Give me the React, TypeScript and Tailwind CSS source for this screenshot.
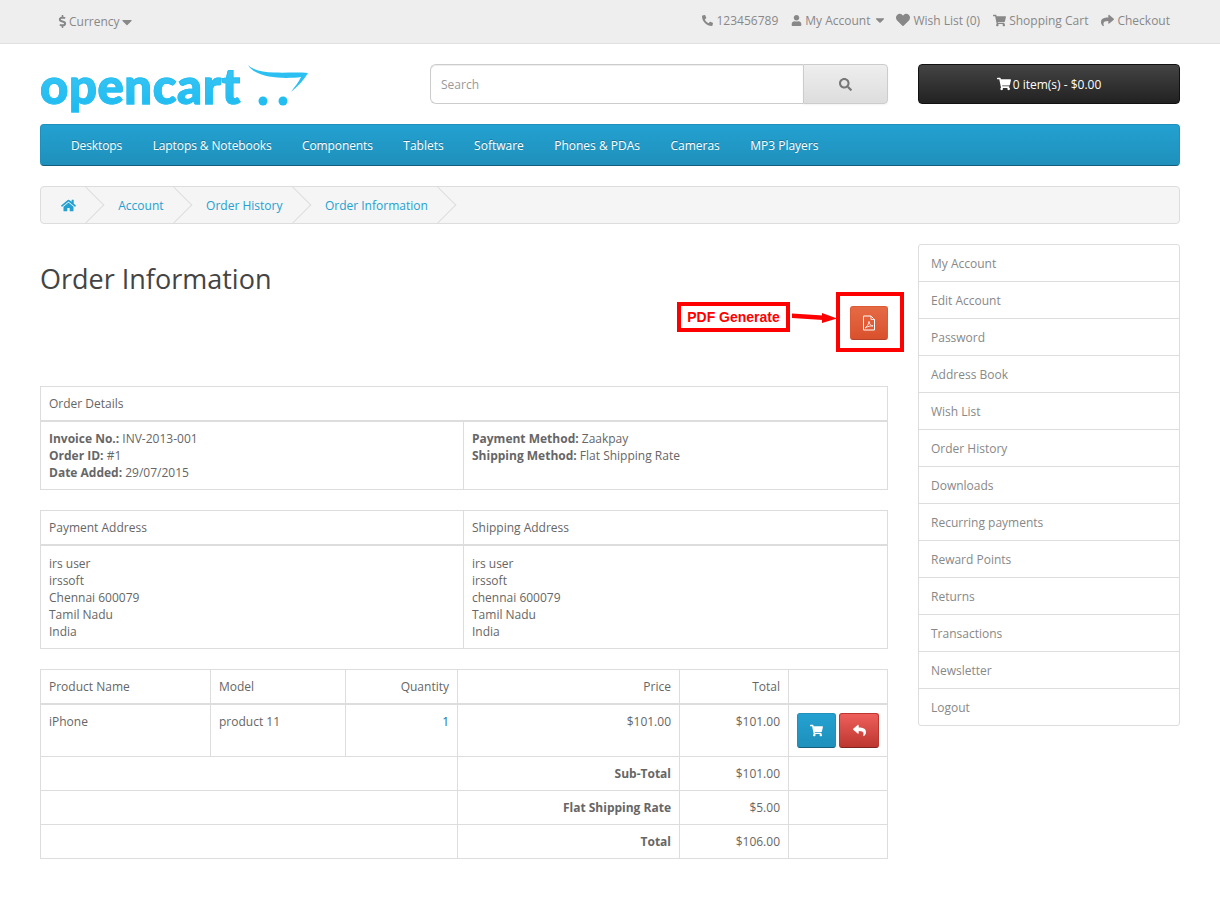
import React from 'react';
import { FaPhone, FaUser, FaHeart, FaShoppingCart, FaShare, FaHome, FaSearch, FaDollarSign, FaCaretDown, FaReply } from 'react-icons/fa';

const navItems = ['Desktops', 'Laptops & Notebooks', 'Components', 'Tablets', 'Software', 'Phones & PDAs', 'Cameras', 'MP3 Players'];
const sideItems = ['My Account', 'Edit Account', 'Password', 'Address Book', 'Wish List', 'Order History', 'Downloads', 'Recurring payments', 'Reward Points', 'Returns', 'Transactions', 'Newsletter', 'Logout'];
const crumbs = ['Account', 'Order History', 'Order Information'];

const Logo = () => (
  <div className="flex items-start w-[270px] h-[40px]">
    <span className="w-[201px] shrink-0 -mt-[3px] pb-[10px] text-[49px] leading-[48px] font-black tracking-[0.6px] bg-gradient-to-b from-[#3cc8f4] to-[#12b8f0] bg-clip-text text-transparent [-webkit-text-stroke:1px_#28bff2] font-['Lato',sans-serif]">opencart</span>
    {/* cart swoosh */}
    <svg width="62" height="44" viewBox="0 0 62 44" className="ml-[7px] shrink-0">
      <path d="M0 1 C5 6 14 8 26 8.5 C38 9 50 8 60 9 C56 16 50 22 43 28 C47 22 51 18 53 13 C38 15 8 15 0 1 Z" fill="#2cc0f2" />
      <circle cx="15" cy="37" r="4.5" fill="#22bdf1" />
      <circle cx="35" cy="37" r="4.5" fill="#22bdf1" />
    </svg>
  </div>
);

// page outline with the acrobat squiggle, thinner than the package's pdf icon
const PdfIcon = () => (
  <svg width="14" height="16" viewBox="0 0 14 16" fill="none" stroke="white">
    <path d="M1.5 1 H9 L12.5 4.5 V15 H1.5 Z" strokeWidth="1" />
    <path d="M9 1 V4.5 H12.5" strokeWidth="0.8" />
    <path d="M3 13 C5 12 6.5 9.5 7 6.5 C7.3 9 8.5 10.5 11 11 C8.5 10.8 6 11.3 3 13 Z" strokeWidth="0.8" />
  </svg>
);

const TopLink = ({ icon, children, className = '' }: { icon: React.ReactNode; children: React.ReactNode; className?: string }) => (
  <span className={`flex items-center gap-[3px] ${className}`}>
    {icon}
    {children}
  </span>
);

const th = 'border border-[#ddd] border-b-2 px-2 font-normal text-left';
const td = 'border border-[#ddd] p-2 align-top';

export default function App() {
  return (
    <div className="bg-white min-h-[897px] text-[12px] leading-[17px] text-[#666] font-['Open_Sans',sans-serif]">
      {/* top bar */}
      <div className="h-[44px] bg-[#eee] border-b border-[#e2e2e2] text-[#888]">
        <div className="w-[1140px] mx-auto h-full flex items-center justify-between pl-[17px] pr-[10px]">
          <span className="flex items-center">
            <FaDollarSign size={13} className="-ml-[1px]" />
            Currency
            <FaCaretDown size={16} className="-ml-[1px]" />
          </span>
          <div className="flex items-center gap-[13px] -mt-[3px]">
            <TopLink icon={<FaPhone size={11} className="-scale-x-100" />}>123456789</TopLink>
            <TopLink icon={<FaUser size={11} />} className="-mr-[4px]">
              My Account <FaCaretDown size={14} />
            </TopLink>
            <TopLink icon={<FaHeart size={14} />}>Wish List (0)</TopLink>
            <TopLink icon={<FaShoppingCart size={13} />}>Shopping Cart</TopLink>
            <TopLink icon={<FaShare size={13} />}>Checkout</TopLink>
          </div>
        </div>
      </div>

      <div className="w-[1140px] mx-auto">
        {/* header */}
        <div className="flex items-start pt-[20px]">
          <Logo />
          <div className="ml-[120px] w-[458px] h-[40px] flex">
            <div className="w-[373px] border border-[#ccc] border-r-0 rounded-l-[6px] px-[10px] flex items-center text-[#999] shadow-[inset_0_1px_1px_rgba(0,0,0,0.075)]">Search</div>
            <div className="flex-1 flex items-center justify-center border border-[#ccc] rounded-r-[4px] bg-gradient-to-b from-[#eeeeee] to-[#dddddd] text-[#777] shadow-[0_1px_2px_rgba(0,0,0,0.05)]">
              <FaSearch size={13} />
            </div>
          </div>
          <div className="ml-[30px] w-[262px] h-[40px] rounded-[4px] border border-[#111] bg-gradient-to-b from-[#444444] to-[#222222] text-white flex items-center justify-center gap-[2px]">
            <FaShoppingCart size={14} />0 item(s) - $0.00
          </div>
        </div>

        {/* menu */}
        <nav className="mt-[20px] h-[42px] flex items-center gap-[30.4px] pl-[30px] rounded-[4px] border border-[#1f90bb] border-b-[#145e7a] bg-gradient-to-b from-[#23a1d1] to-[#1f90bb] text-white [text-shadow:0_-1px_0_rgba(0,0,0,0.25)]">
          {navItems.map((item, i) => <span key={item} className={i < 3 ? 'tracking-[-0.1px]' : ''}>{item}</span>)}
        </nav>

        {/* breadcrumb */}
        <ul className="mt-[20px] h-[38px] flex items-center border border-[#ddd] rounded-[4px] bg-[#f5f5f5] overflow-hidden text-[#23a1d1]">
          <li className="relative pl-[20px] pr-[21px] h-full flex items-center">
            <FaHome size={15} />
            <span className="absolute top-[5px] -right-[2px] w-[26px] h-[26px] border-r border-b border-[#ddd] -rotate-45" />
          </li>
          {crumbs.map(c => (
            <li key={c} className="relative px-[21.25px] h-full flex items-center">
              {c}
              <span className="absolute top-[5px] -right-[2px] w-[26px] h-[26px] border-r border-b border-[#ddd] -rotate-45" />
            </li>
          ))}
        </ul>

        <div className="flex items-start gap-[30px] mt-[20px]">
          <div className="relative w-[848px]">
            <h1 className="text-[27px] leading-[30px] text-[#444] font-normal mt-[20px]">Order Information</h1>
            <div className="flex justify-end mt-[12px] h-[34px]">
              <div className="w-[38px] h-[34px] flex items-center justify-center rounded-[3px] border border-[#dd5a35] border-b-[#b3432a] bg-gradient-to-b from-[#e56b45] to-[#d9502c]">
                <PdfIcon />
              </div>
            </div>

            {/* annotation laid over the page */}
            <div className="absolute left-[637px] top-[58px] w-[113px] h-[30px] border-[4px] border-[#f00] bg-white flex items-center justify-center text-[14px] font-bold text-[#f00] font-['Liberation_Sans',sans-serif]">PDF Generate</div>
            <svg width="46" height="12" viewBox="0 0 46 12" className="absolute left-[752px] top-[68px]">
              <path d="M0 1.5 L31 3.5 L31 8 L0 6 Z M30 1 L45 6.5 L30 11 Z" fill="#f00" />
            </svg>
            <div className="absolute left-[796px] top-[48px] w-[68px] h-[60px] border-[4px] border-[#f00]" />

            <table className="w-full mt-[46px] border-collapse">
              <thead><tr><th colSpan={2} className={`${th} h-[34px]`}>Order Details</th></tr></thead>
              <tbody>
                <tr className="h-[68px]">
                  <td className={`${td} w-[423px]`}>
                    <b>Invoice No.:</b> INV-2013-001<br /><b>Order ID:</b> #1<br /><b>Date Added:</b> 29/07/2015
                  </td>
                  <td className={td}>
                    <b>Payment Method:</b> Zaakpay<br /><b>Shipping Method:</b> Flat Shipping Rate
                  </td>
                </tr>
              </tbody>
            </table>

            <table className="w-full mt-[20px] border-collapse">
              <thead><tr><th className={`${th} h-[35px] w-[423px]`}>Payment Address</th><th className={`${th} h-[35px]`}>Shipping Address</th></tr></thead>
              <tbody>
                <tr>
                  <td className={`${td} pt-[9px]`}>irs user<br />irssoft<br />Chennai 600079<br />Tamil Nadu<br />India</td>
                  <td className={`${td} pt-[9px]`}>irs user<br />irssoft<br />chennai 600079<br />Tamil Nadu<br />India</td>
                </tr>
              </tbody>
            </table>

            <table className="w-full mt-[20px] border-collapse table-fixed">
              <thead>
                <tr className="h-[34px]">
                  <th className={`${th} w-[170px]`}>Product Name</th>
                  <th className={`${th} w-[135px]`}>Model</th>
                  <th className={`${th} w-[112px] !text-right`}>Quantity</th>
                  <th className={`${th} w-[222px] !text-right`}>Price</th>
                  <th className={`${th} w-[109px] !text-right`}>Total</th>
                  <th className={th} />
                </tr>
              </thead>
              <tbody>
                <tr className="h-[52px]">
                  <td className={td}>iPhone</td>
                  <td className={td}>product 11</td>
                  <td className={`${td} text-right text-[#23709e]`}>1</td>
                  <td className={`${td} text-right`}>$101.00</td>
                  <td className={`${td} text-right`}>$101.00</td>
                  <td className={`${td} whitespace-nowrap`}>
                    <div className="flex gap-[3px]">
                      <span className="w-[39px] h-[35px] flex items-center justify-center rounded-[3px] border border-[#1f90bb] border-b-[#145e7a] bg-gradient-to-b from-[#23a1d1] to-[#1f90bb] text-white"><FaShoppingCart size={13} /></span>
                      <span className="w-[40px] h-[35px] flex items-center justify-center rounded-[3px] border border-[#bd362f] border-b-[#802420] bg-gradient-to-b from-[#ee5f5b] to-[#bd362f] text-white"><FaReply size={13} /></span>
                    </div>
                  </td>
                </tr>
                {[['Sub-Total', '$101.00'], ['Flat Shipping Rate', '$5.00'], ['Total', '$106.00']].map(([label, value]) => (
                  <tr key={label} className="h-[34px]">
                    <td colSpan={3} className={td} />
                    <td className={`${td} text-right`}><b>{label}</b></td>
                    <td className={`${td} text-right`}>{value}</td>
                    <td className={td} />
                  </tr>
                ))}
              </tbody>
            </table>
          </div>

          {/* sidebar */}
          <div className="w-[262px] border border-[#ddd] rounded-[3px] text-[#888]">
            {sideItems.map(item => (
              <div key={item} className="h-[37px] px-3 flex items-center border-b border-[#ddd] last:border-b-0 last:h-[36px]">{item}</div>
            ))}
          </div>
        </div>
      </div>
    </div>
  );
}
